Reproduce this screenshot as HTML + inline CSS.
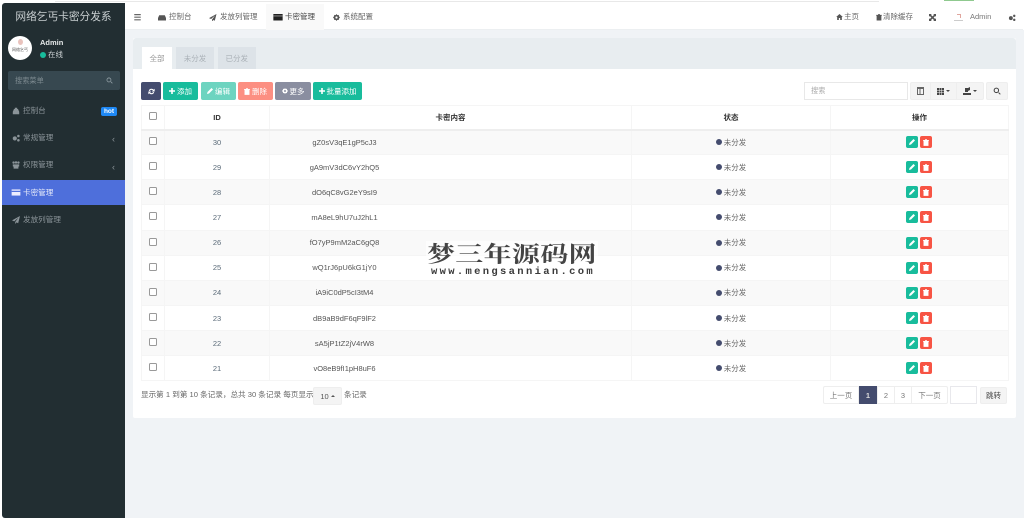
<!DOCTYPE html>
<html lang="zh"><head><meta charset="utf-8"><title>网络乞丐卡密分发系</title>
<style>
*{box-sizing:border-box}
html,body{margin:0;padding:0;width:1024px;height:518px;overflow:hidden;background:#fff;font-family:"Liberation Sans","Noto Sans CJK SC",sans-serif;font-size:7.5px;color:#555}
#w{position:absolute;left:0;top:0;width:1024px;height:518px;overflow:hidden;filter:blur(.3px)}
.a{position:absolute;white-space:nowrap}
.c{display:flex;align-items:center;justify-content:center}
svg{display:block;fill:currentColor}
.b{position:absolute;top:82px;height:18px;border-radius:2px;color:#fff;display:flex;align-items:center;justify-content:center;gap:2px;font-size:7.5px}
.m{position:absolute;left:2px;width:123px;height:25px;color:#8b9499;font-size:7.6px;line-height:26.5px;padding-left:21px}
.m svg{position:absolute;left:9.5px;top:9px}
.n{position:absolute;top:3px;height:27px;line-height:27px;font-size:7.5px;color:#666}
.g{position:absolute;top:82px;height:18px;background:#f4f4f4;border:1px solid #eee;color:#444;display:flex;align-items:center;justify-content:center;gap:2px}
table{position:absolute;left:141px;top:105px;width:867px;border-collapse:collapse;table-layout:fixed;font-size:7.5px;color:#555;background:#fff}
td,th{border:1px solid #f5f5f5;text-align:center;padding:0;height:25.15px;font-weight:normal}
th{height:24px;font-weight:bold;color:#333;border-bottom:2px solid #eee}
tbody td:nth-child(3){padding-right:212px}
tbody td:nth-child(2){color:#5a6a78}
tr:nth-child(odd) td{background:#f9f9f9}
.ck{display:block;width:8px;height:8px;border:1px solid #999;border-radius:1.5px;margin:0 auto;background:#fff;position:relative;top:-1px}
.st{display:inline-flex;align-items:center;gap:2px;color:#666}
.st i{display:block;width:6px;height:6px;border-radius:50%;background:#444c6e}
.op{display:flex;justify-content:center;gap:2px;position:relative;left:-1px}
.op span{display:flex;align-items:center;justify-content:center;width:12px;height:12px;border-radius:2px;color:#fff}
.p{position:absolute;top:386px;height:18px;border:1px solid #eee;background:#fff;color:#777;display:flex;align-items:center;justify-content:center;font-size:7.5px}
</style></head><body><div id="w">

<!-- page chrome -->
<div class="a" style="left:55px;top:1px;width:824px;height:1px;background:#e8e8e8"></div>
<div class="a" style="left:944px;top:0;width:30px;height:1px;background:#8fc98f"></div>
<div class="a" style="left:125px;top:30px;width:899px;height:488px;background:#f0f3f6"></div>

<!-- sidebar -->
<div class="a" style="left:2px;top:3px;width:123px;height:515px;background:#222e32;border-radius:3px 0 0 3px"></div>
<div class="a c" style="left:2px;top:3px;width:123px;height:27px;color:#c9cfd1;font-size:10.7px">网络乞丐卡密分发系</div>
<div class="a c" style="left:8px;top:36px;width:24px;height:24px;border-radius:50%;background:#fff;color:#555;font-size:4px;padding-top:4px">网络乞丐</div>
<div class="a" style="left:18px;top:39px;width:5px;height:6px;border-radius:50%;background:#e9c3bd"></div>
<div class="a" style="left:40px;top:37px;color:#e6e9ea;font-size:7.5px;font-weight:bold;line-height:11px">Admin</div>
<div class="a" style="left:39.5px;top:51.5px;width:6.5px;height:6.5px;border-radius:50%;background:#18bc9c"></div>
<div class="a" style="left:48px;top:49px;color:#cfd4d6;font-size:7.5px;line-height:12px">在线</div>
<div class="a" style="left:7.5px;top:70.5px;width:112px;height:19.5px;background:#374850;border-radius:2px;color:#7d8a90;font-size:7.2px;line-height:19.5px;padding-left:7.5px">搜索菜单</div>
<svg class="a" style="left:105.500px;top:76.500px;color:#93a0a6" width="7" height="7" viewBox="0 0 10 10"><path d="M4.2 0.8a3.4 3.4 0 1 0 0 6.8a3.4 3.4 0 0 0 0-6.8zm0 1.1a2.3 2.3 0 1 1 0 4.6a2.3 2.3 0 0 1 0-4.6zM6.5 7.2l.8-.8 2.2 2.2-.8.8z"/></svg>

<div class="m" style="top:98px"><svg width="8" height="8" viewBox="0 0 10 10"><path d="M1 9V6l1.500-3.500h5L9 6v3zM3.500 1h3v2h-3z"/></svg>控制台</div>
<div class="a c" style="left:101px;top:107px;width:16px;height:8.500px;background:#1e88f5;border-radius:2px;color:#fff;font-size:6.500px;font-weight:bold">hot</div>
<div class="m" style="top:125px"><svg width="8" height="8" viewBox="0 0 10 10"><circle cx="3.500" cy="5.500" r="2.600"/><circle cx="8" cy="2.500" r="1.600"/><circle cx="8" cy="7.800" r="1.600"/></svg>常规管理</div>
<div class="a" style="left:112px;top:134px;color:#8b9499;font-size:9px;line-height:11px">‹</div>
<div class="m" style="top:152px"><svg width="8" height="8" viewBox="0 0 10 10"><circle cx="2" cy="2" r="1.500"/><circle cx="5" cy="1.800" r="1.500"/><circle cx="8" cy="2" r="1.500"/><path d="M1 4.200h8v2.500l-1 .3V9.500H2V7l-1-.3z"/></svg>权限管理</div>
<div class="a" style="left:112px;top:162px;color:#8b9499;font-size:9px;line-height:11px">‹</div>
<div class="m" style="top:180px;background:#4e6fdb;color:#e8ecfa"><svg width="10" height="7" style="left:8.500px" viewBox="0 0 10 8"><path d="M0 .5h10v7H0z" fill="#eef"/><path d="M0 2h10v1.400H0z" fill="#4e6fdb"/></svg>卡密管理</div>
<div class="m" style="top:207px"><svg width="8" height="8" viewBox="0 0 10 10"><path d="M10 0L0 5.500l2.800 1.200L8 2 4 7.500V10l1.700-2 2 1z"/></svg>发放列管理</div>

<!-- top nav -->
<div class="a" style="left:125px;top:3px;width:898px;height:27px;background:#fff;border-bottom:1px solid #eceff1;border-radius:0 4px 0 0"></div>
<svg class="a" style="left:133.500px;top:14px;color:#666" width="7" height="6.500" viewBox="0 0 7 7"><path d="M0 0h7v1.300H0zM0 2.800h7v1.300H0zM0 5.600h7v1.300H0z"/></svg>
<div class="a" style="left:265.500px;top:4px;width:58px;height:26px;background:#f9f9f9"></div>
<svg class="a" style="left:158px;top:14px;color:#555" width="8" height="6.500" viewBox="0 0 10 8"><path d="M0 8V5l1.500-3.500h7L10 5v3z"/></svg>
<div class="n" style="left:169px">控制台</div>
<svg class="a" style="left:209px;top:13.500px;color:#555" width="7.500" height="7.500" viewBox="0 0 10 10"><path d="M10 0L0 5.500l2.800 1.200L8 2 4 7.500V10l1.700-2 2 1z"/></svg>
<div class="n" style="left:220px">发放列管理</div>
<svg class="a" style="left:273px;top:14px;color:#222" width="10" height="6.500" viewBox="0 0 10 7"><path d="M0 0h10v7H0z"/><path d="M0 1.600h10v1H0z" fill="#999"/></svg>
<div class="n" style="left:285px;color:#444">卡密管理</div>
<svg class="a" style="left:333px;top:13.500px;color:#555" width="7" height="7" viewBox="0 0 10 10"><path d="M5 0l1.200 1.600 2-.4.3 2L10 5 8.500 6.600l-.3 2-2-.2L5 10 3.800 8.400l-2 .2-.3-2L0 5l1.500-1.800.3-2 2 .4zM5 3.400a1.600 1.600 0 1 0 0 3.200 1.600 1.600 0 0 0 0-3.200z"/></svg>
<div class="n" style="left:343px">系统配置</div>

<svg class="a" style="left:835.500px;top:14px;color:#555" width="7" height="6" viewBox="0 0 10 9"><path d="M5 0l5 4.500H8.500V9H6V6H4v3H1.500V4.500H0z"/></svg>
<div class="n" style="left:844px">主页</div>
<svg class="a" style="left:875.500px;top:14px;color:#555" width="6" height="6.500" viewBox="0 0 8 9"><path d="M0 1.200h8v1H7.300V9H.7V2.200H0zM2.700 0h2.600v1H2.700z"/></svg>
<div class="n" style="left:883px">清除缓存</div>
<svg class="a" style="left:929px;top:13.500px;color:#555" width="7" height="7" viewBox="0 0 10 10"><path d="M0 0h4L2.800 1.200 5 3.400 7.200 1.200 6 0h4v4L8.800 2.800 6.600 5l2.200 2.200L10 6v4H6l1.200-1.200L5 6.600 2.800 8.800 4 10H0V6l1.200 1.200L3.400 5 1.200 2.800 0 4z"/></svg>
<div class="a" style="left:954px;top:14px;width:9px;height:6.500px;border-bottom:1px solid #ccc"></div>
<div class="a" style="left:957px;top:13.500px;width:4px;height:4px;border-top:1px solid #e0a69e;border-right:1px solid #e0a69e"></div>
<div class="n" style="left:970px;color:#777">Admin</div>
<svg class="a" style="left:1008px;top:13.500px;color:#555" width="8" height="7.500" viewBox="0 0 10 10"><circle cx="3.500" cy="5.500" r="2.600"/><circle cx="8" cy="2.500" r="1.600"/><circle cx="8" cy="7.800" r="1.600"/></svg>

<!-- panel -->
<div class="a" style="left:133px;top:38px;width:883px;height:380px;background:#fff;border-radius:2px"></div>
<div class="a" style="left:133px;top:38px;width:883px;height:31px;background:#e8edf0;border-radius:3px 3px 0 0"></div>
<div class="a c" style="left:142px;top:47px;width:30px;height:22px;background:#fff;color:#999">全部</div>
<div class="a c" style="left:176px;top:47px;width:38px;height:22px;background:#dde3e8;color:#aab1b7">未分发</div>
<div class="a c" style="left:217.500px;top:47px;width:38.500px;height:22px;background:#dde3e8;color:#aab1b7">已分发</div>

<!-- toolbar -->
<div class="b" style="left:141px;width:20px;background:#444c6e"><svg width="7" height="7" viewBox="0 0 10 10"><path d="M5 1a4 4 0 0 1 3 1.400L9.500 1v4h-4l1.400-1.400A2.500 2.500 0 0 0 2.600 4.200L1.100 4A4 4 0 0 1 5 1zM.5 5h4L3.100 6.400A2.500 2.500 0 0 0 7.400 5.800l1.500.2A4 4 0 0 1 2 7.600L.5 9z"/></svg></div>
<div class="b" style="left:163px;width:35px;background:#18bc9c"><svg width="6" height="6" viewBox="0 0 6 6"><path d="M2.200 0h1.600v2.200H6v1.600H3.800V6H2.200V3.800H0V2.200h2.200z"/></svg>添加</div>
<div class="b" style="left:201px;width:35px;background:#6dd4c0"><svg width="6" height="6" viewBox="0 0 6 6"><path d="M4.500 0L6 1.500 2 5.500 0 6 .5 4z"/></svg>编辑</div>
<div class="b" style="left:238px;width:35px;background:#fc8f82"><svg width="6" height="7" viewBox="0 0 8 9"><path d="M0 1.200h8v1H7.300V9H.7V2.200H0zM2.700 0h2.600v1H2.700z"/></svg>删除</div>
<div class="b" style="left:275px;width:36px;background:#8a8ea0"><svg width="6" height="6" viewBox="0 0 10 10"><path d="M5 0l1.200 1.600 2-.4.3 2L10 5 8.500 6.600l-.3 2-2-.2L5 10 3.800 8.400l-2 .2-.3-2L0 5l1.500-1.800.3-2 2 .4zM5 3.400a1.600 1.600 0 1 0 0 3.200 1.600 1.600 0 0 0 0-3.200z"/></svg>更多</div>
<div class="b" style="left:313px;width:49px;background:#18bc9c"><svg width="6" height="6" viewBox="0 0 6 6"><path d="M2.200 0h1.600v2.200H6v1.600H3.800V6H2.200V3.800H0V2.200h2.200z"/></svg>批量添加</div>

<div class="a" style="left:804px;top:82px;width:104px;height:18px;border:1px solid #e8e8e8;color:#aaa;font-size:7.200px;line-height:16px;padding-left:6px">搜索</div>
<div class="g" style="left:910px;width:21px;border-radius:2px 0 0 2px;color:#666"><svg width="7" height="8" viewBox="0 0 7 8"><path d="M0 0h7v8H0zM1 2v5h1.500V2zM3.500 2v5H6V2z"/></svg></div>
<div class="g" style="left:930px;width:26.500px"><svg width="7" height="7" viewBox="0 0 7 7"><path d="M0 0h2v2H0zM2.500 0h2v2h-2zM5 0h2v2H5zM0 2.500h2v2H0zM2.500 2.500h2v2h-2zM5 2.500h2v2H5zM0 5h2v2H0zM2.500 5h2v2h-2zM5 5h2v2H5z"/></svg><svg width="4" height="2" viewBox="0 0 4 2"><path d="M0 0h4L2 2z"/></svg></div>
<div class="g" style="left:956px;width:28px;border-radius:0 2px 2px 0"><svg width="8" height="8" viewBox="0 0 8 8"><path d="M0 6h8v2H0zM2 1h3l2-1v3L5 4v1H2z"/></svg><svg width="4" height="2" viewBox="0 0 4 2"><path d="M0 0h4L2 2z"/></svg></div>
<div class="g" style="left:986px;width:22px;border-radius:2px"><svg width="8" height="8" viewBox="0 0 10 10"><path d="M4.200.8a3.400 3.400 0 1 0 0 6.800 3.400 3.400 0 0 0 0-6.800zm0 1.300a2.100 2.100 0 1 1 0 4.200 2.100 2.100 0 0 1 0-4.200zM6.500 7.400l.9-.9 2.200 2.200-.9.900z"/></svg></div>

<!-- table -->
<table>
<colgroup><col style="width:23px"><col style="width:105px"><col style="width:362px"><col style="width:199px"><col style="width:178px"></colgroup>
<thead><tr><th><span class="ck"></span></th><th>ID</th><th>卡密内容</th><th>状态</th><th>操作</th></tr></thead>
<tbody>
<tr><td><span class="ck"></span></td><td>30</td><td>gZ0sV3qE1gP5cJ3</td><td><span class="st"><i></i>未分发</span></td><td><div class="op"><span style="background:#18bc9c"><svg width="6" height="6" viewBox="0 0 6 6"><path d="M4.500 0L6 1.500 2 5.500 0 6 .5 4z"/></svg></span><span style="background:#f75444"><svg width="6" height="7" viewBox="0 0 8 9"><path d="M0 1.200h8v1H7.300V9H.7V2.200H0zM2.700 0h2.600v1H2.700z"/></svg></span></div></td></tr>
<tr><td><span class="ck"></span></td><td>29</td><td>gA9mV3dC6vY2hQ5</td><td><span class="st"><i></i>未分发</span></td><td><div class="op"><span style="background:#18bc9c"><svg width="6" height="6" viewBox="0 0 6 6"><path d="M4.500 0L6 1.500 2 5.500 0 6 .5 4z"/></svg></span><span style="background:#f75444"><svg width="6" height="7" viewBox="0 0 8 9"><path d="M0 1.200h8v1H7.300V9H.7V2.200H0zM2.700 0h2.600v1H2.700z"/></svg></span></div></td></tr>
<tr><td><span class="ck"></span></td><td>28</td><td>dO6qC8vG2eY9sI9</td><td><span class="st"><i></i>未分发</span></td><td><div class="op"><span style="background:#18bc9c"><svg width="6" height="6" viewBox="0 0 6 6"><path d="M4.500 0L6 1.500 2 5.500 0 6 .5 4z"/></svg></span><span style="background:#f75444"><svg width="6" height="7" viewBox="0 0 8 9"><path d="M0 1.200h8v1H7.300V9H.7V2.200H0zM2.700 0h2.600v1H2.700z"/></svg></span></div></td></tr>
<tr><td><span class="ck"></span></td><td>27</td><td>mA8eL9hU7uJ2hL1</td><td><span class="st"><i></i>未分发</span></td><td><div class="op"><span style="background:#18bc9c"><svg width="6" height="6" viewBox="0 0 6 6"><path d="M4.500 0L6 1.500 2 5.500 0 6 .5 4z"/></svg></span><span style="background:#f75444"><svg width="6" height="7" viewBox="0 0 8 9"><path d="M0 1.200h8v1H7.300V9H.7V2.200H0zM2.700 0h2.600v1H2.700z"/></svg></span></div></td></tr>
<tr><td><span class="ck"></span></td><td>26</td><td>fO7yP9mM2aC6gQ8</td><td><span class="st"><i></i>未分发</span></td><td><div class="op"><span style="background:#18bc9c"><svg width="6" height="6" viewBox="0 0 6 6"><path d="M4.500 0L6 1.500 2 5.500 0 6 .5 4z"/></svg></span><span style="background:#f75444"><svg width="6" height="7" viewBox="0 0 8 9"><path d="M0 1.200h8v1H7.300V9H.7V2.200H0zM2.700 0h2.600v1H2.700z"/></svg></span></div></td></tr>
<tr><td><span class="ck"></span></td><td>25</td><td>wQ1rJ6pU6kG1jY0</td><td><span class="st"><i></i>未分发</span></td><td><div class="op"><span style="background:#18bc9c"><svg width="6" height="6" viewBox="0 0 6 6"><path d="M4.500 0L6 1.500 2 5.500 0 6 .5 4z"/></svg></span><span style="background:#f75444"><svg width="6" height="7" viewBox="0 0 8 9"><path d="M0 1.200h8v1H7.300V9H.7V2.200H0zM2.700 0h2.600v1H2.700z"/></svg></span></div></td></tr>
<tr><td><span class="ck"></span></td><td>24</td><td>iA9iC0dP5cI3tM4</td><td><span class="st"><i></i>未分发</span></td><td><div class="op"><span style="background:#18bc9c"><svg width="6" height="6" viewBox="0 0 6 6"><path d="M4.500 0L6 1.500 2 5.500 0 6 .5 4z"/></svg></span><span style="background:#f75444"><svg width="6" height="7" viewBox="0 0 8 9"><path d="M0 1.200h8v1H7.300V9H.7V2.200H0zM2.700 0h2.600v1H2.700z"/></svg></span></div></td></tr>
<tr><td><span class="ck"></span></td><td>23</td><td>dB9aB9dF6qF9lF2</td><td><span class="st"><i></i>未分发</span></td><td><div class="op"><span style="background:#18bc9c"><svg width="6" height="6" viewBox="0 0 6 6"><path d="M4.500 0L6 1.500 2 5.500 0 6 .5 4z"/></svg></span><span style="background:#f75444"><svg width="6" height="7" viewBox="0 0 8 9"><path d="M0 1.200h8v1H7.300V9H.7V2.200H0zM2.700 0h2.600v1H2.700z"/></svg></span></div></td></tr>
<tr><td><span class="ck"></span></td><td>22</td><td>sA5jP1tZ2jV4rW8</td><td><span class="st"><i></i>未分发</span></td><td><div class="op"><span style="background:#18bc9c"><svg width="6" height="6" viewBox="0 0 6 6"><path d="M4.500 0L6 1.500 2 5.500 0 6 .5 4z"/></svg></span><span style="background:#f75444"><svg width="6" height="7" viewBox="0 0 8 9"><path d="M0 1.200h8v1H7.300V9H.7V2.200H0zM2.700 0h2.600v1H2.700z"/></svg></span></div></td></tr>
<tr><td><span class="ck"></span></td><td>21</td><td>vO8eB9fI1pH8uF6</td><td><span class="st"><i></i>未分发</span></td><td><div class="op"><span style="background:#18bc9c"><svg width="6" height="6" viewBox="0 0 6 6"><path d="M4.500 0L6 1.500 2 5.500 0 6 .5 4z"/></svg></span><span style="background:#f75444"><svg width="6" height="7" viewBox="0 0 8 9"><path d="M0 1.200h8v1H7.300V9H.7V2.200H0zM2.700 0h2.600v1H2.700z"/></svg></span></div></td></tr>
</tbody></table>

<!-- footer -->
<div class="a" style="left:141px;top:389px;line-height:12px;color:#666;font-size:7.6px">显示第 1 到第 10 条记录，总共 30 条记录 每页显示</div>
<div class="a c" style="left:313px;top:387px;width:29px;height:18px;background:#f4f4f4;border:1px solid #eee;border-radius:2px;color:#555;gap:2px;font-size:7.500px">10<svg width="4" height="2" viewBox="0 0 4 2"><path d="M2 0l2 2H0z"/></svg></div>
<div class="a" style="left:344px;top:389px;line-height:12px;color:#666;font-size:7.600px">条记录</div>
<div class="p" style="left:823px;width:36px;border-radius:2px 0 0 2px">上一页</div>
<div class="p" style="left:859px;width:18px;background:#444c6e;border-color:#444c6e;color:#ddd;font-weight:bold">1</div>
<div class="p" style="left:877px;width:18px">2</div>
<div class="p" style="left:894px;width:18px">3</div>
<div class="p" style="left:911px;width:37px;border-radius:0 2px 2px 0">下一页</div>
<div class="a" style="left:950px;top:386px;width:27px;height:18px;border:1px solid #e8e8ec;background:#fff"></div>
<div class="a c" style="left:980px;top:387px;width:27px;height:17px;background:#f4f4f4;border:1px solid #eee;border-radius:2px;color:#444">跳转</div>

<!-- watermark -->
<div class="a" style="left:426px;top:241px;width:172px;height:36px;background:rgba(255,255,255,.6)"></div>
<div class="a" style="left:427px;top:241px;font-family:'Noto Serif CJK SC',serif;font-size:28px;line-height:30px;color:#444;font-weight:700;letter-spacing:.3px;transform:scaleY(.8);transform-origin:0 0">梦三年源码网</div>
<div class="a" style="left:431px;top:265.500px;font-family:'Liberation Mono',monospace;font-size:10.500px;font-weight:bold;line-height:12px;color:#3a3a3a;letter-spacing:2.330px">www.mengsannian.com</div>
</div></body></html>
